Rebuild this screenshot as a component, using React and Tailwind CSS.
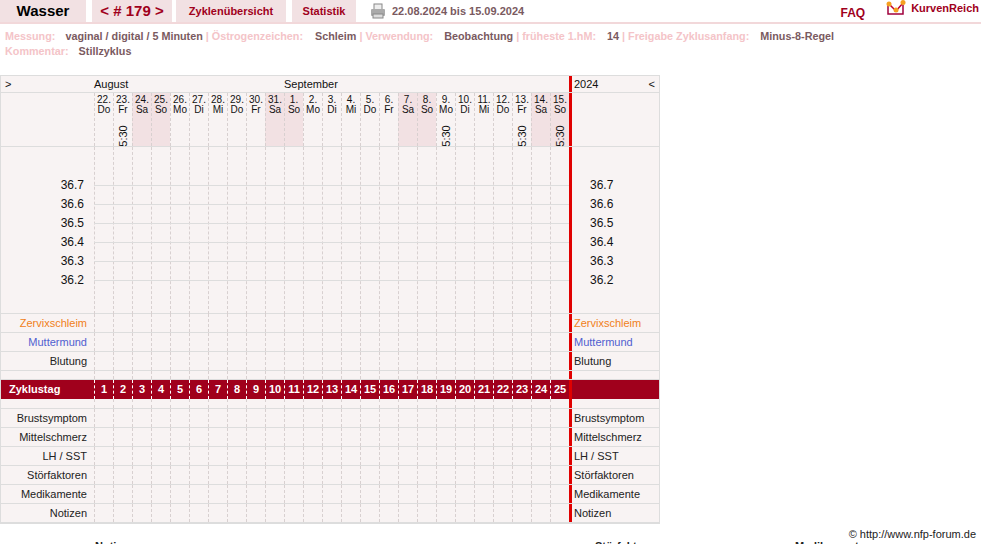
import React from 'react'

const days = [
  ['22.', 'Do'], ['23.', 'Fr', 1], ['24.', 'Sa', 0, 1], ['25.', 'So', 0, 1], ['26.', 'Mo'], ['27.', 'Di'], ['28.', 'Mi'],
  ['29.', 'Do'], ['30.', 'Fr'], ['31.', 'Sa', 0, 1], ['1.', 'So', 0, 1], ['2.', 'Mo'], ['3.', 'Di'], ['4.', 'Mi'],
  ['5.', 'Do'], ['6.', 'Fr'], ['7.', 'Sa', 0, 1], ['8.', 'So', 0, 1], ['9.', 'Mo', 1], ['10.', 'Di'], ['11.', 'Mi'],
  ['12.', 'Do'], ['13.', 'Fr', 1], ['14.', 'Sa', 0, 1], ['15.', 'So', 1, 1],
]
const temps = ['36.7', '36.6', '36.5', '36.4', '36.3', '36.2']

const Cells = ({ h, red }) => (
  <>
    {days.map((d, i) => (
      <div key={i} className={`w-[19px] shrink-0 border-l border-dashed ${red ? 'border-white' : 'border-[#d8d0d0]'}`} style={{ height: h }} />
    ))}
  </>
)

const Row = ({ label, color = 'text-[#222]', h = 19 }) => (
  <div className="flex border-b border-[#ddd]" style={{ height: h }}>
    <div className={`w-[93px] shrink-0 text-right pr-[7px] leading-[19px] ${color}`}>{label}</div>
    <Cells h={h - 1} />
    <div className="w-[3px] shrink-0 bg-[#e00000]" />
    <div className={`flex-1 pl-[2px] leading-[19px] ${color}`}>{label}</div>
  </div>
)

const App = () => {
  return (
    <div className="w-[981px] h-[544px] overflow-hidden bg-white text-[11px] relative" style={{ fontFamily: '"Liberation Sans", Arial, sans-serif' }}>
      <div className="flex items-stretch h-[24px] border-b-2 border-[#f2d8da]">
        <div className="w-[86px] bg-[#f2e1e3] text-[15px] font-bold text-black flex items-center justify-center">Wasser</div>
        <div className="ml-[6px] w-[80px] bg-[#f2e1e3] text-[15px] font-bold text-[#a0001c] flex items-center justify-center">&lt; # 179 &gt;</div>
        <div className="ml-[4px] w-[110px] bg-[#f2e1e3] font-bold text-[#a0001c] flex items-center justify-center">Zyklenübersicht</div>
        <div className="ml-[6px] w-[64px] bg-[#f2e1e3] font-bold text-[#a0001c] flex items-center justify-center">Statistik</div>
        <div className="ml-[14px] flex items-center gap-[6px] text-[#7a5a5f] font-bold">
          <svg width="16" height="16" viewBox="0 0 16 16"><rect x="4" y="1" width="8" height="6" fill="#eee" stroke="#888"/><rect x="1" y="6" width="14" height="7" rx="1" fill="#aaa"/><rect x="3" y="11" width="10" height="4" fill="#ddd" stroke="#888"/></svg>
          22.08.2024 bis 15.09.2024
        </div>
        <div className="ml-auto flex items-center gap-[20px] pr-[2px]">
          <span className="text-[#a0001c] font-bold text-[12px] mt-[4px]">FAQ</span>
          <span className="flex items-center gap-[4px] text-[#a0001c] font-bold text-[11px] -mt-[6px]">
            <svg width="22" height="16" viewBox="0 0 22 16"><path d="M3 5v9h15V5" fill="none" stroke="#a0003c" strokeWidth="1.5"/><path d="M4 4l7 7 7-8" fill="none" stroke="#c0002c" strokeWidth="1.5"/><circle cx="4" cy="4" r="2.5" fill="#f5a020"/><circle cx="11" cy="10" r="2.5" fill="#f5a020"/><circle cx="18" cy="2.5" r="2.5" fill="#f5a020"/></svg>
            KurvenReich
          </span>
        </div>
      </div>
      <div className="px-[5px] pt-[5px] font-bold leading-[15px] text-[10.8px]">
        <div className="text-[#f4c4c8]">
          Messung:<span className="text-[#7a5a5f] ml-[10px]">vaginal / digital / 5 Minuten</span> | Östrogenzeichen:<span className="text-[#7a5a5f] ml-[12px]">Schleim</span> | Verwendung:<span className="text-[#7a5a5f] ml-[11px]">Beobachtung</span> | früheste 1.hM:<span className="text-[#7a5a5f] ml-[11px]">14</span> | Freigabe Zyklusanfang:<span className="text-[#7a5a5f] ml-[11px]">Minus-8-Regel</span>
        </div>
        <div className="text-[#f4c4c8]">Kommentar:<span className="text-[#7a5a5f] ml-[10px]">Stillzyklus</span></div>
      </div>
      <div className="mt-[16px] w-[660px] border border-[#ddd] bg-[#f8f3f3] text-[#111]">
        <div className="flex h-[17px] border-b border-[#ddd] leading-[16px]">
          <div className="w-[93px] shrink-0 pl-[4px]">&gt;</div>
          <div className="w-[190px] shrink-0">August</div>
          <div className="w-[285px] shrink-0">September</div>
          <div className="w-[3px] shrink-0 bg-[#e00000]" />
          <div className="flex-1 flex justify-between px-[2px]"><span>2024</span><span className="pr-[2px]">&lt;</span></div>
        </div>
        <div className="flex h-[54px] border-b border-[#ddd]">
          <div className="w-[93px] shrink-0" />
          {days.map((d, i) => (
            <div key={i} className={`w-[19px] shrink-0 border-l border-dashed border-[#d8d0d0] flex flex-col items-center text-[10px] leading-[10px] pt-[2px] ${d[3] ? 'bg-[#f2e1e3]' : ''}`}>
              <span>{d[0]}</span><span>{d[1]}</span>
              {d[2] ? <span className="mt-[16px] -rotate-90 inline-block text-[11px]">5:30</span> : null}
            </div>
          ))}
          <div className="w-[3px] shrink-0 bg-[#e00000]" />
          <div className="flex-1" />
        </div>
        <div className="flex h-[167px] border-b border-[#ddd]">
          <div className="w-[93px] shrink-0 flex flex-col items-end pr-[10px] pt-[31px] text-[12px]">
            {temps.map(t => <div key={t} className="h-[19px] leading-[14px]">{t}</div>)}
          </div>
          <div className="relative flex">
            <Cells h={167} />
            <div className="absolute left-0 right-0 top-[38px] flex flex-col">
              {temps.map(t => <div key={t} className="h-[19px] border-t border-[#ddd]" />)}
            </div>
          </div>
          <div className="w-[3px] shrink-0 bg-[#e00000]" />
          <div className="flex-1 flex flex-col pl-[18px] pt-[31px] text-[12px]">
            {temps.map(t => <div key={t} className="h-[19px] leading-[14px]">{t}</div>)}
          </div>
        </div>
        <Row label="Zervixschleim" color="text-[#f08020]" />
        <Row label="Muttermund" color="text-[#5060d0]" />
        <Row label="Blutung" />
        <Row label="" h={9} />
        <div className="flex h-[19px] bg-[#a0001c] text-white font-bold leading-[19px]">
          <div className="w-[93px] shrink-0 pl-[8px]">Zyklustag</div>
          {days.map((d, i) => (
            <div key={i} className="w-[19px] shrink-0 border-l border-dashed border-white text-center">{i + 1}</div>
          ))}
          <div className="w-[3px] shrink-0 bg-[#e00000]" />
          <div className="flex-1" />
        </div>
        <Row label="" h={10} />
        {['Brustsymptom', 'Mittelschmerz', 'LH / SST', 'Störfaktoren', 'Medikamente', 'Notizen'].map(l => <Row key={l} label={l} />)}
      </div>
      <div className="absolute right-[5px] top-[526px] text-[#222]">© http://www.nfp-forum.de</div>
      <div className="absolute top-[538px] left-0 w-full font-bold text-[#222]">
        <span className="absolute left-[95px]">Notizen</span>
        <span className="absolute left-[595px]">Störfaktoren</span>
        <span className="absolute left-[795px]">Medikamente</span>
      </div>
    </div>
  )
}

export default App
